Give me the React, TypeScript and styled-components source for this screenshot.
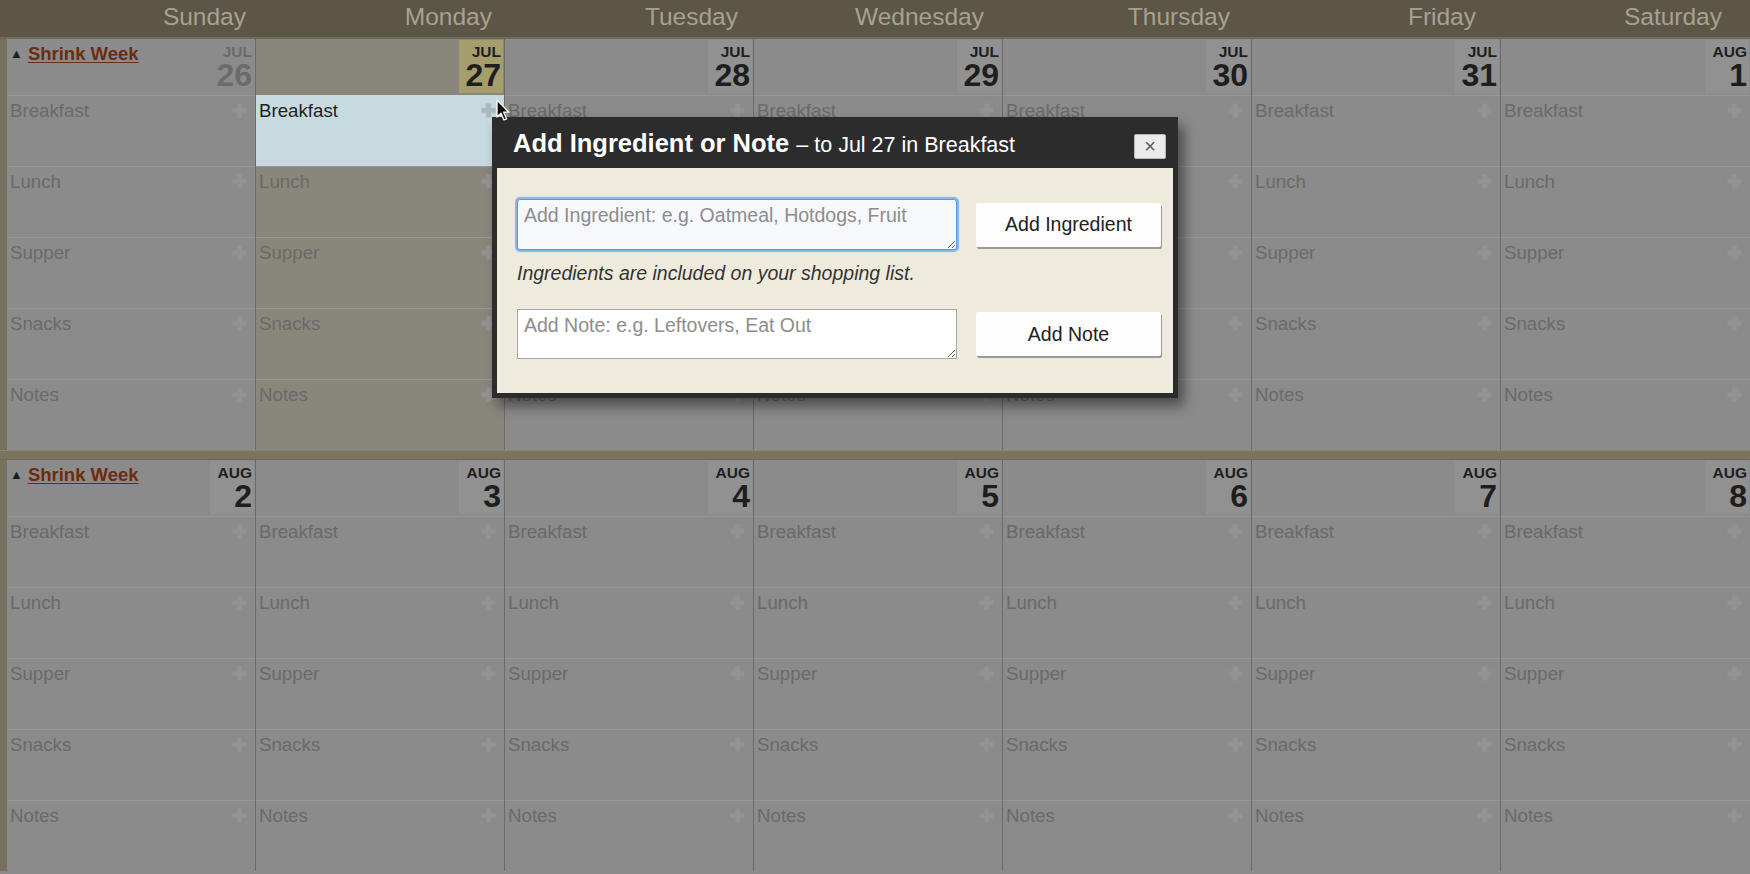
import React from "react";
import styled, { createGlobalStyle } from "styled-components";

const GlobalStyle = createGlobalStyle`
  html, body {
    margin: 0;
    padding: 0;
    background: #8a8a8a;
    overflow: hidden;
    font-family: "Liberation Sans", Arial, Helvetica, sans-serif;
  }
  * { box-sizing: border-box; }
`;

const Page = styled.div`
  position: relative;
  width: 1750px;
  height: 874px;
  overflow: hidden;
  background: #8a8a8a;
`;

const HeaderBar = styled.div`
  display: grid;
  grid-template-columns: repeat(7, 1fr);
  height: 39px;
  padding-right: 28px;
  background: #5b5646;
  border-bottom: 2px solid #6f6a59;
`;

const DayName = styled.div`
  text-align: right;
  font-size: 24.5px;
  line-height: 34px;
  color: #a7a191;
`;

const Week = styled.div`
  display: grid;
  grid-template-columns: repeat(7, 1fr);
  border-left: 7px solid #76715e;
`;

const WeekGap = styled.div`
  height: 10px;
  background: #79745d;
  border-top: 1px solid #8a856f;
  border-bottom: 1px solid #6e6a57;
`;

const DayColumn = styled.div<{ $today?: boolean; $last?: boolean }>`
  display: flex;
  flex-direction: column;
  background: ${(p) => (p.$today ? "#89867b" : "#8b8b8b")};
  border-right: ${(p) => (p.$last ? "none" : "1px solid #6c6b66")};
`;

const DayHead = styled.div`
  height: 56px;
  display: flex;
  justify-content: space-between;
  align-items: flex-start;
  padding-left: 3px;
`;

const ShrinkWrap = styled.div`
  display: flex;
  align-items: center;
  gap: 5px;
  padding-top: 4px;
  font-size: 18.5px;
  line-height: 21px;
`;

const Triangle = styled.span`
  font-size: 13px;
  color: #1d1d1d;
  line-height: 12px;
`;

const ShrinkLink = styled.a`
  font-weight: bold;
  color: #6c2b12;
  text-decoration: underline;
  text-underline-offset: 2px;
  cursor: pointer;
`;

const DateBox = styled.div<{ $tone: "past" | "today" | "future" }>`
  margin: 1px 1px 0 auto;
  width: 44px;
  height: 53px;
  padding: 3px 2px 0 0;
  text-align: right;
  font-weight: bold;
  background: ${(p) =>
    p.$tone === "today" ? "#a39e6c" : p.$tone === "future" ? "#919191" : "transparent"};
  color: ${(p) => (p.$tone === "past" ? "#6b6b6b" : "#1e1e1e")};
`;

const Month = styled.div`
  font-size: 15.5px;
  line-height: 17px;
`;

const DayNum = styled.div`
  font-size: 32px;
  line-height: 30px;
`;

const MealSlot = styled.div<{ $active?: boolean }>`
  height: 71px;
  display: flex;
  justify-content: space-between;
  align-items: flex-start;
  padding: 4px 8px 0 3px;
  border-top: 1px solid ${(p) => (p.$active ? "#c6d9df" : "#979797")};
  background: ${(p) => (p.$active ? "#c7dadf" : "transparent")};
  font-size: 18.7px;
  line-height: 21px;
  color: ${(p) => (p.$active ? "#1f1f1f" : "#6a6a6a")};
`;

const PlusMark = styled.svg`
  flex: none;
  margin-top: 3px;
`;

const Popup = styled.div`
  position: absolute;
  left: 492px;
  top: 117px;
  width: 686px;
  height: 281px;
  display: flex;
  flex-direction: column;
  background: #2c2c2c;
  padding: 0 5px 5px 5px;
  box-shadow: 6px 8px 12px rgba(0, 0, 0, 0.45);
`;

const PopupTitle = styled.div`
  height: 51px;
  display: flex;
  align-items: center;
  justify-content: space-between;
  padding: 2px 7px 0 16px;
  color: #ffffff;
`;

const TitleText = styled.div`
  font-size: 25.5px;
  font-weight: bold;
  white-space: nowrap;
`;

const TitleSub = styled.span`
  font-size: 21.5px;
  font-weight: normal;
`;

const CloseButton = styled.button`
  width: 32px;
  height: 25px;
  margin-top: 5px;
  padding: 0;
  border: 1px solid #b9b9b9;
  border-radius: 2px;
  background: #ebebeb;
  color: #5a5a5a;
  font-family: "Liberation Sans", Arial, sans-serif;
  font-size: 20px;
  line-height: 20px;
  cursor: pointer;
`;

const PopupBody = styled.div`
  flex: 1;
  background: #eeebdd;
  padding: 31px 12px 0 20px;
  display: flex;
  flex-direction: column;
`;

const FormRow = styled.div`
  display: grid;
  grid-template-columns: 440px 185px;
  column-gap: 19px;
  align-items: center;
`;

const Field = styled.textarea<{ $focused?: boolean }>`
  width: 440px;
  height: ${(p) => (p.$focused ? "51px" : "50px")};
  padding: 4px 6px;
  font-family: "Liberation Sans", Arial, sans-serif;
  font-size: 19.5px;
  line-height: 22px;
  color: #222;
  background: ${(p) => (p.$focused ? "#f7f8fc" : "#ffffff")};
  border: 1px solid ${(p) => (p.$focused ? "#5f97e6" : "#a5a5a5")};
  border-radius: ${(p) => (p.$focused ? "3px" : "0")};
  box-shadow: ${(p) => (p.$focused ? "0 0 1px 2px #86b2ee" : "none")};
  outline: none;
  resize: both;
  &::placeholder {
    color: #8d8d8d;
  }
`;

const ActionButton = styled.button`
  height: 44px;
  border: none;
  border-radius: 2px;
  background: #fdfdfd;
  box-shadow: 1px 2px 0 #999999;
  color: #222222;
  font-family: "Liberation Sans", Arial, sans-serif;
  font-size: 19.5px;
  cursor: pointer;
`;

const Hint = styled.div`
  margin: 12px 0 25px;
  font-size: 19.5px;
  line-height: 22px;
  font-style: italic;
  color: #333333;
`;

const Cursor = styled.svg`
  position: absolute;
  left: 496px;
  top: 99px;
`;

type Tone = "past" | "today" | "future";
type Day = { month: string; day: number; tone: Tone };

const dayNames = ["Sunday", "Monday", "Tuesday", "Wednesday", "Thursday", "Friday", "Saturday"];
const meals = ["Breakfast", "Lunch", "Supper", "Snacks", "Notes"];

const weeks: Day[][] = [
  [
    { month: "JUL", day: 26, tone: "past" },
    { month: "JUL", day: 27, tone: "today" },
    { month: "JUL", day: 28, tone: "future" },
    { month: "JUL", day: 29, tone: "future" },
    { month: "JUL", day: 30, tone: "future" },
    { month: "JUL", day: 31, tone: "future" },
    { month: "AUG", day: 1, tone: "future" },
  ],
  [2, 3, 4, 5, 6, 7, 8].map((d) => ({ month: "AUG", day: d, tone: "future" as Tone })),
];

const Plus = ({ color }: { color: string }) => (
  <PlusMark width="15" height="15" viewBox="0 0 15 15">
    <path
      d="M5.2 0.8h4.6v4.4h4.4v4.6H9.8v4.4H5.2V9.8H0.8V5.2h4.4z"
      fill={color}
      stroke={color}
      strokeWidth="0.6"
      strokeLinejoin="round"
    />
  </PlusMark>
);

export default function App() {
  return (
    <Page>
      <GlobalStyle />
      <HeaderBar>
        {dayNames.map((n) => (
          <DayName key={n}>{n}</DayName>
        ))}
      </HeaderBar>
      {weeks.map((week, wi) => (
        <React.Fragment key={wi}>
          {wi > 0 && <WeekGap />}
          <Week>
            {week.map((d, di) => (
              <DayColumn key={di} $today={d.tone === "today"} $last={di === 6}>
                <DayHead>
                  {di === 0 ? (
                    <ShrinkWrap>
                      <Triangle>▲</Triangle>
                      <ShrinkLink>Shrink Week</ShrinkLink>
                    </ShrinkWrap>
                  ) : (
                    <span />
                  )}
                  <DateBox $tone={d.tone}>
                    <Month>{d.month}</Month>
                    <DayNum>{d.day}</DayNum>
                  </DateBox>
                </DayHead>
                {meals.map((m, mi) => {
                  const active = d.tone === "today" && mi === 0;
                  return (
                    <MealSlot key={m} $active={active}>
                      <span>{m}</span>
                      <Plus color={active ? "#a9b9be" : "#939393"} />
                    </MealSlot>
                  );
                })}
              </DayColumn>
            ))}
          </Week>
        </React.Fragment>
      ))}

      <Popup>
        <PopupTitle>
          <TitleText>
            Add Ingredient or Note <TitleSub>– to Jul 27 in Breakfast</TitleSub>
          </TitleText>
          <CloseButton>×</CloseButton>
        </PopupTitle>
        <PopupBody>
          <FormRow>
            <Field $focused placeholder="Add Ingredient: e.g. Oatmeal, Hotdogs, Fruit" />
            <ActionButton>Add Ingredient</ActionButton>
          </FormRow>
          <Hint>Ingredients are included on your shopping list.</Hint>
          <FormRow>
            <Field placeholder="Add Note: e.g. Leftovers, Eat Out" />
            <ActionButton>Add Note</ActionButton>
          </FormRow>
        </PopupBody>
      </Popup>

      <Cursor width="16" height="24" viewBox="0 0 16 24">
        <path
          d="M1 1 L1 18 L5 14.2 L8 21 L10.6 19.9 L7.7 13.2 L13 13.2 Z"
          fill="#111"
          stroke="#fff"
          strokeWidth="1.3"
          strokeLinejoin="round"
        />
      </Cursor>
    </Page>
  );
}
